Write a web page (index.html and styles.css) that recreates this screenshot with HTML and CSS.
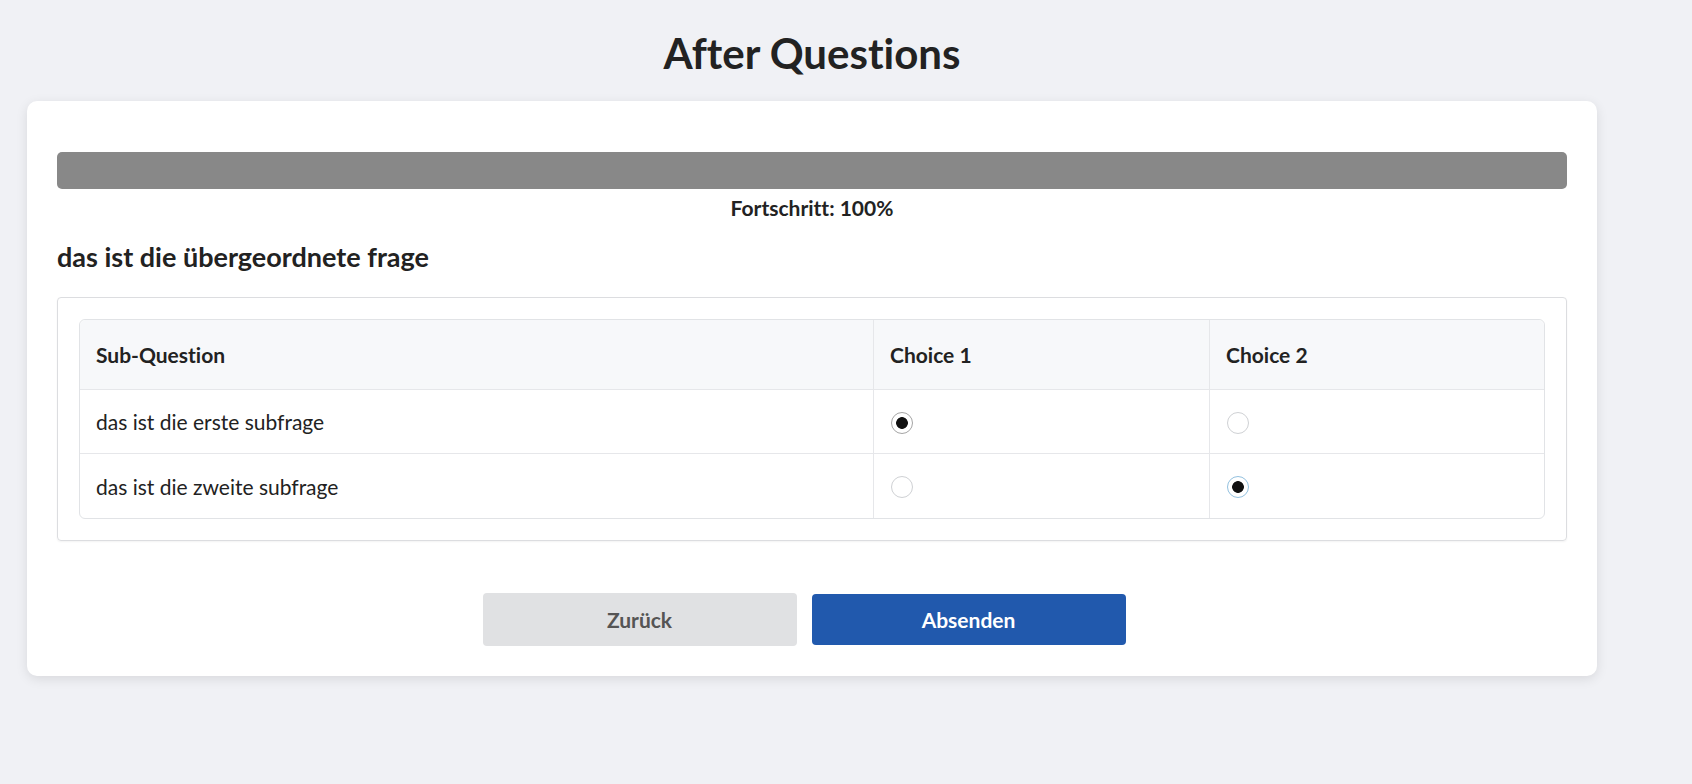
FILE: index.html
```html
<!DOCTYPE html>
<html lang="de">
<head>
<meta charset="utf-8">
<title>After Questions</title>
<link rel="stylesheet" href="styles.css">
</head>
<body>
<div class="page">
  <h1 class="title">After Questions</h1>
  <div class="card">
    <div class="progress"><div class="progress-fill" style="width:100%"></div></div>
    <div class="progress-label">Fortschritt: 100%</div>
    <h2 class="question">das ist die übergeordnete frage</h2>
    <div class="matrix-box">
      <table class="matrix">
        <thead>
          <tr>
            <th class="col-sub">Sub-Question</th>
            <th class="col-choice">Choice 1</th>
            <th>Choice 2</th>
          </tr>
        </thead>
        <tbody>
          <tr>
            <td>das ist die erste subfrage</td>
            <td><input type="radio" class="radio" name="q1" checked></td>
            <td><input type="radio" class="radio" name="q1"></td>
          </tr>
          <tr>
            <td>das ist die zweite subfrage</td>
            <td><input type="radio" class="radio" name="q2"></td>
            <td><input type="radio" class="radio radio-focus" name="q2" checked></td>
          </tr>
        </tbody>
      </table>
    </div>
    <div class="actions">
      <button class="btn btn-back">Zurück</button>
      <button class="btn btn-submit">Absenden</button>
    </div>
  </div>
</div>
</body>
</html>
```
FILE: styles.css
```css
* { box-sizing: border-box; }
html, body { margin: 0; padding: 0; }
body {
  background: #f0f1f5;
  font-family: Lato, "Open Sans", "Liberation Sans", sans-serif;
  font-variant-ligatures: none;
  color: #222;
  height: 784px;
  overflow: hidden;
}
.page {
  width: 1570px;
  margin-left: 27px;
  padding-top: 28px;
}
.title {
  margin: 0;
  height: 73px;
  text-align: center;
  font-size: 42px;
  line-height: 50px;
  font-weight: 700;
  color: #222;
}
.card {
  background: #fff;
  border-radius: 10px;
  box-shadow: 0 3px 12px rgba(0, 0, 0, 0.1);
  padding: 51px 30px 30px 30px;
}
.progress {
  height: 37px;
  background: #e6e6e6;
  border-radius: 5px;
  overflow: hidden;
}
.progress-fill {
  height: 100%;
  background: #888888;
}
.progress-label {
  text-align: center;
  font-weight: 700;
  font-size: 21px;
  line-height: 24px;
  margin-top: 7px;
  color: #222;
}
.question {
  margin: 21px 0 0 0;
  font-size: 27px;
  line-height: 32px;
  font-weight: 700;
  color: #222;
}
.matrix-box {
  margin-top: 24px;
  border: 1px solid #dcdde0;
  border-radius: 4px;
  padding: 21px;
  box-shadow: 0 1px 2px rgba(0, 0, 0, 0.05);
}
.matrix {
  width: 100%;
  table-layout: fixed;
  border-collapse: separate;
  border-spacing: 0;
  border: 1px solid #e1e3e6;
  border-radius: 6px;
  font-size: 21px;
  color: #222;
}
.matrix th, .matrix td {
  text-align: left;
  padding: 0 16px;
  border-right: 1px solid #e6e7ea;
  border-bottom: 1px solid #e6e7ea;
}
.matrix th:last-child, .matrix td:last-child { border-right: none; }
.matrix tbody tr:last-child td { border-bottom: none; }
.matrix th {
  background: #f7f8fa;
  height: 70px;
  font-weight: 700;
}
.matrix thead th:first-child { border-top-left-radius: 6px; }
.matrix thead th:last-child { border-top-right-radius: 6px; }
.matrix td { height: 64px; }
.col-sub { width: 794px; }
.col-choice { width: 336px; }
.radio {
  -webkit-appearance: none;
  appearance: none;
  margin: 0;
  width: 22px;
  height: 22px;
  border-radius: 50%;
  border: 1px solid #cfd1d4;
  background: #fff;
  display: block;
  position: relative;
  top: 1px;
  left: 1px;
}
.radio:checked {
  border-color: #a5a5a5;
  background: radial-gradient(circle, #111 0, #111 5.5px, #fff 6.2px);
}
.radio-focus:checked { border-color: #93c1df; }
.actions {
  display: flex;
  justify-content: center;
  gap: 15px;
  margin-top: 52px;
  padding-right: 16px;
}
.btn {
  width: 314px;
  height: 53px;
  border: none;
  border-radius: 4px;
  font-family: Lato, "Open Sans", "Liberation Sans", sans-serif;
  font-variant-ligatures: none;
  font-size: 21px;
  font-weight: 700;
}
.btn-back {
  background: #e0e1e3;
  color: #555;
}
.btn-submit {
  background: #2159ad;
  color: #fff;
  height: 51px;
  margin-top: 1px;
}
```
